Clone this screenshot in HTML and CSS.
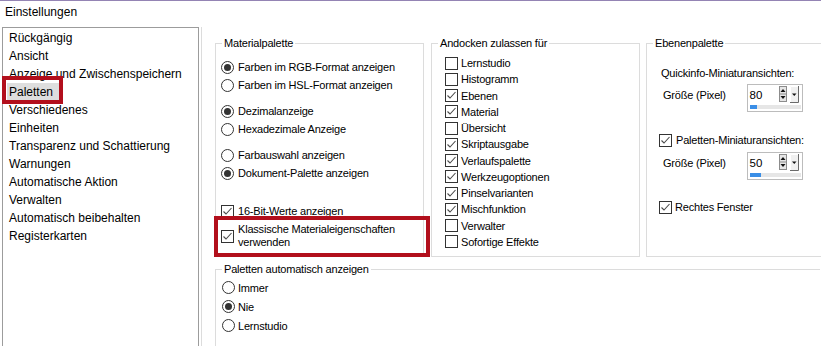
FILE: index.html
```html
<!DOCTYPE html>
<html lang="de">
<head>
<meta charset="utf-8">
<title>Einstellungen</title>
<link rel="stylesheet" href="styles.css">
</head>
<body>
<div class="window">
  <div class="titlebar">Einstellungen</div>
  <div class="main">
    <div class="nav">
      <ul class="nav-list">
        <li class="nav-item">Rückgängig</li>
        <li class="nav-item">Ansicht</li>
        <li class="nav-item">Anzeige und Zwischenspeichern</li>
        <li class="nav-item selected"><span class="nav-label">Paletten</span><span class="mark mark-nav"></span></li>
        <li class="nav-item">Verschiedenes</li>
        <li class="nav-item">Einheiten</li>
        <li class="nav-item">Transparenz und Schattierung</li>
        <li class="nav-item">Warnungen</li>
        <li class="nav-item">Automatische Aktion</li>
        <li class="nav-item">Verwalten</li>
        <li class="nav-item">Automatisch beibehalten</li>
        <li class="nav-item">Registerkarten</li>
      </ul>
    </div>
    <div class="panel">
      <div class="top-row">
        <div class="group g-mat">
          <div class="group-head"><span class="group-title">Materialpalette</span></div>
          <div class="group-body mat-body">
            <div class="opt"><span class="rb on"></span><span>Farben im RGB-Format anzeigen</span></div>
            <div class="opt"><span class="rb"></span><span>Farben im HSL-Format anzeigen</span></div>
            <div class="opt sep"><span class="rb on"></span><span>Dezimalanzeige</span></div>
            <div class="opt"><span class="rb"></span><span>Hexadezimale Anzeige</span></div>
            <div class="opt sep"><span class="rb"></span><span>Farbauswahl anzeigen</span></div>
            <div class="opt"><span class="rb on"></span><span>Dokument-Palette anzeigen</span></div>
            <div class="opt sep-lg"><span class="cb on"><svg viewBox="0 0 11 11"><path d="M1.5 5.5 L4 8 L9.5 2"/></svg></span><span>16-Bit-Werte anzeigen</span></div>
            <div class="opt multi"><span class="cb on"><svg viewBox="0 0 11 11"><path d="M1.5 5.5 L4 8 L9.5 2"/></svg></span><span>Klassische Materialeigenschaften<br>verwenden</span></div>
          </div>
          <span class="mark mark-classic"></span>
        </div>
        <div class="group g-dock">
          <div class="group-head"><span class="group-title">Andocken zulassen für</span></div>
          <div class="group-body dock-body">
            <div class="dopt"><span class="cb"></span><span>Lernstudio</span></div>
            <div class="dopt"><span class="cb"></span><span>Histogramm</span></div>
            <div class="dopt"><span class="cb on"><svg viewBox="0 0 11 11"><path d="M1.5 5.5 L4 8 L9.5 2"/></svg></span><span>Ebenen</span></div>
            <div class="dopt"><span class="cb on"><svg viewBox="0 0 11 11"><path d="M1.5 5.5 L4 8 L9.5 2"/></svg></span><span>Material</span></div>
            <div class="dopt"><span class="cb"></span><span>Übersicht</span></div>
            <div class="dopt"><span class="cb on"><svg viewBox="0 0 11 11"><path d="M1.5 5.5 L4 8 L9.5 2"/></svg></span><span>Skriptausgabe</span></div>
            <div class="dopt"><span class="cb on"><svg viewBox="0 0 11 11"><path d="M1.5 5.5 L4 8 L9.5 2"/></svg></span><span>Verlaufspalette</span></div>
            <div class="dopt"><span class="cb on"><svg viewBox="0 0 11 11"><path d="M1.5 5.5 L4 8 L9.5 2"/></svg></span><span>Werkzeugoptionen</span></div>
            <div class="dopt"><span class="cb on"><svg viewBox="0 0 11 11"><path d="M1.5 5.5 L4 8 L9.5 2"/></svg></span><span>Pinselvarianten</span></div>
            <div class="dopt"><span class="cb on"><svg viewBox="0 0 11 11"><path d="M1.5 5.5 L4 8 L9.5 2"/></svg></span><span>Mischfunktion</span></div>
            <div class="dopt"><span class="cb"></span><span>Verwalter</span></div>
            <div class="dopt"><span class="cb"></span><span>Sofortige Effekte</span></div>
          </div>
        </div>
        <div class="group g-layers">
          <div class="group-head"><span class="group-title">Ebenenpalette</span></div>
          <div class="group-body layers-body">
            <div class="info-label">Quickinfo-Miniaturansichten:</div>
            <div class="size-row">
              <span class="size-label">Größe (Pixel)</span>
              <div class="spin">
                <div class="spin-top">
                  <span class="spin-value">80</span>
                  <svg class="spin-btns" width="21" height="17" viewBox="0 0 21 17">
                    <rect x="1.5" y="0.5" width="7" height="15" fill="#e6e6e6" stroke="#8c8c8c"/>
                    <line x1="1.5" y1="8" x2="8.5" y2="8" stroke="#8c8c8c"/>
                    <path d="M2.5 6 L5 3 L7.5 6 Z" fill="#111"/>
                    <path d="M2.5 10 L5 13 L7.5 10 Z" fill="#111"/>
                    <rect x="12" y="0" width="8" height="16" fill="#f0f0f0"/>
                    <path d="M12.5 16 V0.5 H20" fill="none" stroke="#fff"/>
                    <path d="M12 16.5 H20.5 V0" fill="none" stroke="#6a6a6a"/>
                    <path d="M14 7.5 L16.25 10 L18.5 7.5 Z" fill="#111"/>
                  </svg>
                </div>
                <div class="spin-track"><div class="spin-fill" style="width:7px"></div></div>
              </div>
            </div>
            <div class="lopt lopt-first"><span class="cb on"><svg viewBox="0 0 11 11"><path d="M1.5 5.5 L4 8 L9.5 2"/></svg></span><span>Paletten-Miniaturansichten:</span></div>
            <div class="size-row size-row-2">
              <span class="size-label">Größe (Pixel)</span>
              <div class="spin">
                <div class="spin-top">
                  <span class="spin-value">50</span>
                  <svg class="spin-btns" width="21" height="17" viewBox="0 0 21 17">
                    <rect x="1.5" y="0.5" width="7" height="15" fill="#e6e6e6" stroke="#8c8c8c"/>
                    <line x1="1.5" y1="8" x2="8.5" y2="8" stroke="#8c8c8c"/>
                    <path d="M2.5 6 L5 3 L7.5 6 Z" fill="#111"/>
                    <path d="M2.5 10 L5 13 L7.5 10 Z" fill="#111"/>
                    <rect x="12" y="0" width="8" height="16" fill="#f0f0f0"/>
                    <path d="M12.5 16 V0.5 H20" fill="none" stroke="#fff"/>
                    <path d="M12 16.5 H20.5 V0" fill="none" stroke="#6a6a6a"/>
                    <path d="M14 7.5 L16.25 10 L18.5 7.5 Z" fill="#111"/>
                  </svg>
                </div>
                <div class="spin-track"><div class="spin-fill" style="width:11px"></div></div>
              </div>
            </div>
            <div class="lopt lopt-last"><span class="cb on"><svg viewBox="0 0 11 11"><path d="M1.5 5.5 L4 8 L9.5 2"/></svg></span><span>Rechtes Fenster</span></div>
          </div>
        </div>
      </div>
      <div class="group g-auto">
        <div class="group-head"><span class="group-title">Paletten automatisch anzeigen</span></div>
        <div class="group-body auto-body">
          <div class="aopt"><span class="rb"></span><span>Immer</span></div>
          <div class="aopt"><span class="rb on"></span><span>Nie</span></div>
          <div class="aopt"><span class="rb"></span><span>Lernstudio</span></div>
        </div>
      </div>
    </div>
  </div>
</div>
</body>
</html>
```
FILE: styles.css
```css
* { box-sizing: border-box; }
html, body { margin: 0; padding: 0; }
body {
  width: 821px;
  height: 346px;
  overflow: hidden;
  background: #fff;
  color: #000;
  font-family: "Liberation Sans", Arial, sans-serif;
  font-size: 12px;
}
.window { border-top: 1px solid #9484b4; height: 346px; overflow: hidden; }
.titlebar { height: 26px; line-height: 22px; padding-left: 5px; }
.main { display: flex; align-items: flex-start; height: 319px; overflow: hidden; }

/* navigation list */
.nav {
  margin-left: 2px;
  width: 197px;
  height: 319px;
  border: 1px solid #9c9c9c;
  border-bottom: none;
  padding-top: 1px;
  flex: none;
}
.nav-list { list-style: none; margin: 0; padding: 0; }
.nav-item {
  height: 18px;
  line-height: 18px;
  padding-left: 6px;
  white-space: nowrap;
  position: relative;
}
.nav-label {
  display: inline-block;
  margin-left: -2px;
  padding: 0 7px 0 2px;
  background: #dedede;
}
.mark {
  position: absolute;
  border: 4px solid #b20f1c;
  pointer-events: none;
}
.mark-nav { left: -1px; top: -7px; width: 61px; height: 28px; }

/* right panel */
.panel {
  flex: 1;
  margin-left: 2px;
  height: 319px;
  border-left: 1px solid #dcdcdc;
  padding: 9px 0 0 13px;
  overflow: hidden;
  font-size: 11px;
  letter-spacing: -0.2px;
}
.top-row { display: flex; }
.group { display: flex; flex-direction: column; position: relative; flex: none; }
.group-head { display: flex; height: 14px; flex: none; }
.group-head::before {
  content: "";
  width: 6px;
  margin-top: 7px;
  border-top: 1px solid #dcdcdc;
  border-left: 1px solid #dcdcdc;
}
.group-head::after {
  content: "";
  flex: 1;
  margin-top: 7px;
  border-top: 1px solid #dcdcdc;
  border-right: 1px solid #dcdcdc;
}
.group-title { padding: 0 2px; line-height: 14px; white-space: nowrap; }
.group-body { flex: 1; border: 1px solid #dcdcdc; border-top: none; }

.g-mat { width: 209px; height: 221px; }
.g-dock { width: 209px; height: 221px; margin-left: 7px; }
.g-layers { width: 200px; height: 221px; margin-left: 6px; }
.g-auto { width: 605px; height: 84px; margin-top: 5px; }
.g-auto .group-head::after { border-right: none; }

/* controls */
.rb {
  width: 13px;
  height: 13px;
  border: 1px solid #333;
  border-radius: 50%;
  background: #fff;
  display: flex;
  align-items: center;
  justify-content: center;
  flex: none;
}
.rb.on::after {
  content: "";
  width: 7px;
  height: 7px;
  border-radius: 50%;
  background: #333;
}
.cb {
  width: 13px;
  height: 13px;
  border: 1px solid #333;
  background: #fff;
  flex: none;
  display: block;
}
.cb svg { display: block; width: 11px; height: 11px; }
.cb svg path { fill: none; stroke: #4a4a4a; stroke-width: 1.1; }

/* Materialpalette */
.mat-body { padding: 8px 0 0 5px; }
.opt { display: flex; align-items: center; gap: 4px; height: 18px; white-space: nowrap; }
.opt.sep { margin-top: 8px; }
.opt.sep-lg { margin-top: 20px; }
.opt.multi { height: auto; margin-top: 3px; line-height: 13px; }
.mark-classic { left: -1px; top: 180px; width: 216px; height: 41px; }

/* Andocken */
.dock-body { padding: 5px 0 0 13px; }
.dopt { display: flex; align-items: center; gap: 3px; height: 16.25px; white-space: nowrap; }

/* Ebenenpalette */
.layers-body { padding: 15px 0 0 0; }
.info-label { padding-left: 14px; height: 16px; line-height: 16px; white-space: nowrap; }
.size-row { display: flex; margin-top: 3px; padding-left: 16px; }
.size-row-2 { margin-top: 4px; }
.size-label { width: 84px; padding-top: 3px; line-height: 16px; white-space: nowrap; }
.spin {
  width: 56px;
  height: 28px;
  border: 1px solid #bcbcbc;
  display: flex;
  flex-direction: column;
  letter-spacing: 0;
}
.spin-top { display: flex; align-items: center; height: 19px; padding-left: 1.5px; }
.spin-value { flex: 1; font-size: 11.5px; }
.spin-btns { display: block; margin-right: 3px; }
.spin-track { height: 4px; margin: 1px 1px 0 1.5px; background: #e6e6e6; }
.spin-fill { height: 100%; background: #3a8ee6; }
.lopt { display: flex; align-items: center; gap: 4px; height: 16px; padding-left: 12px; white-space: nowrap; }
.lopt-first { margin-top: 20px; }
.lopt-last { margin-top: 19px; gap: 3px; }

/* Paletten automatisch anzeigen */
.auto-body { padding: 2px 0 0 6px; border-right: none; border-bottom: none; }
.aopt { display: flex; align-items: center; gap: 3px; height: 19px; white-space: nowrap; }
```
